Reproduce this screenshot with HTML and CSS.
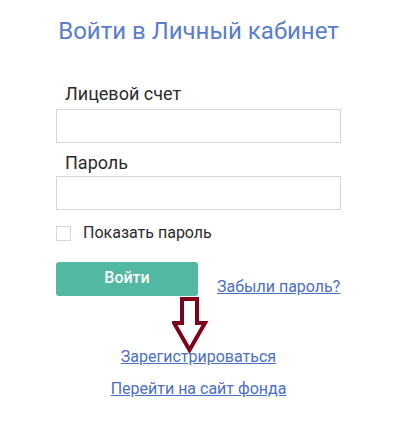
FILE: index.html
```html
<!DOCTYPE html>
<html lang="ru">
<head>
<meta charset="utf-8">
<link rel="stylesheet" href="styles.css">
</head>
<body>
<div class="login">
  <h1 class="title">Войти в Личный кабинет</h1>
  <label class="label label-first">Лицевой счет</label>
  <div class="input"></div>
  <label class="label label-second">Пароль</label>
  <div class="input"></div>
  <div class="check-row">
    <span class="checkbox"></span>
    <span class="check-text">Показать пароль</span>
  </div>
  <div class="actions">
    <div class="btn">Войти</div>
    <a class="link forgot" href="#">Забыли пароль?</a>
  </div>
  <div class="links">
    <a class="link" href="#">Зарегистрироваться</a>
    <a class="link" href="#">Перейти на сайт фонда</a>
  </div>
  <svg class="arrow" width="40" height="58" viewBox="0 0 40 58">
    <path d="M10 2 H25 V26 H33 L17.5 53 L2 26 H10 Z" fill="none" stroke="#7f0019" stroke-width="4" stroke-linejoin="miter"/>
  </svg>
</div>
</body>
</html>
```

FILE: styles.css
```css
html, body {
  margin: 0;
  padding: 0;
  background: #ffffff;
}
body {
  font-family: Roboto, "Noto Sans", sans-serif;
}
.login {
  position: relative;
  width: 285px;
  margin-left: 56px;
  display: flex;
  flex-direction: column;
}
.title {
  margin: 17px 0 0 0;
  font-size: 24px;
  line-height: 28px;
  font-weight: 400;
  color: #5a7ecb;
  text-align: center;
}
.label {
  display: block;
  font-size: 18px;
  line-height: 22px;
  color: #2b2b2b;
  padding-left: 9px;
}
.label-first {
  margin-top: 38px;
  margin-bottom: 4px;
}
.label-second {
  margin-top: 9px;
  margin-bottom: 2px;
}
.input {
  height: 32px;
  border: 1px solid #d6d6d6;
  background: #fff;
}
.check-row {
  display: flex;
  align-items: center;
  margin-top: 15px;
  height: 16px;
}
.checkbox {
  width: 13px;
  height: 13px;
  border: 1px solid #d6d6d6;
  background: #fff;
}
.check-text {
  margin-left: 12px;
  font-size: 16px;
  line-height: 18px;
  color: #2b2b2b;
}
.actions {
  display: flex;
  align-items: flex-start;
  margin-top: 21px;
}
.btn {
  width: 142px;
  height: 34px;
  border-radius: 3px;
  background: #52b8a1;
  color: #ffffff;
  font-size: 16px;
  font-weight: 500;
  line-height: 32px;
  text-align: center;
}
.link {
  color: #4b6fc2;
  font-size: 16px;
  line-height: 18px;
  text-decoration: underline;
}
.forgot {
  margin-left: 19px;
  margin-top: 16px;
}
.links {
  display: flex;
  flex-direction: column;
  align-items: center;
  gap: 14px;
  margin-top: 52px;
}
.arrow {
  position: absolute;
  left: 116px;
  top: 297px;
}
```
